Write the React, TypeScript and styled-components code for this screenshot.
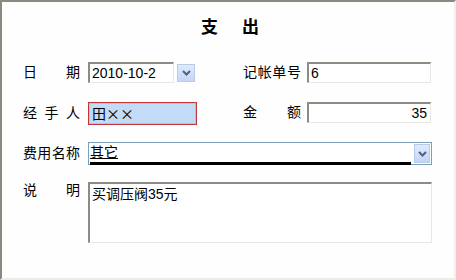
import { FC } from 'react';
import styled, { createGlobalStyle } from 'styled-components';

const FONT = `"Liberation Sans", "Noto Sans CJK SC", sans-serif`;
const CJK_FONT = `"Noto Sans CJK SC", "Liberation Sans", sans-serif`;

const GlobalStyle = createGlobalStyle`
  html, body {
    margin: 0;
    padding: 0;
    background: #fff;
  }
  body {
    font-family: ${FONT};
  }
`;

const Panel = styled.div`
  box-sizing: border-box;
  width: 456px;
  height: 280px;
  background: #fefefe;
  border-top: 2px solid #8a8a80;
  border-left: 2px solid #8a8a80;
  border-right: 2px solid #f0f0ec;
  border-bottom: 2px solid #ecece8;
  display: flex;
  flex-direction: column;
`;

const Title = styled.div`
  margin-top: 15px;
  height: 22px;
  line-height: 22px;
  text-align: center;
  font-size: 17px;
  font-weight: bold;
  color: #000;
  padding-left: 4px;
`;

const TitleGap = styled.span`
  display: inline-block;
  width: 24px;
`;

const Rows = styled.div`
  margin-top: 23px;
  display: flex;
  flex-direction: column;
`;

const Row = styled.div<{ $h: number }>`
  display: flex;
  align-items: flex-start;
  height: ${(p) => p.$h}px;
  padding-left: 21px;
`;

const Group = styled.div<{ $w?: number; $gap?: number }>`
  display: flex;
  align-items: flex-start;
  width: ${(p) => (p.$w ? `${p.$w}px` : 'auto')};
  gap: ${(p) => p.$gap ?? 8}px;
`;

const Label = styled.div<{ $w?: number; $lh?: number }>`
  flex-shrink: 0;
  width: ${(p) => p.$w ?? 57}px;
  display: flex;
  justify-content: space-between;
  font-size: 14px;
  line-height: ${(p) => p.$lh ?? 21}px;
  color: #000;
`;

const Sunken = styled.div<{ $w: number; $h: number; $align?: string }>`
  box-sizing: border-box;
  flex-shrink: 0;
  width: ${(p) => p.$w}px;
  height: ${(p) => p.$h}px;
  background: #fff;
  border-top: 2px solid #8c8c84;
  border-left: 2px solid #8c8c84;
  border-right: 1px solid #e8e8e2;
  border-bottom: 1px solid #e8e8e2;
  font-size: 14px;
  line-height: 18px;
  padding: 0 3px 0 2px;
  text-align: ${(p) => p.$align ?? 'left'};
  color: #000;
  white-space: nowrap;
  overflow: hidden;
`;

const Focused = styled.div`
  box-sizing: border-box;
  width: 109px;
  height: 23px;
  background: #c2dcf8;
  border: 1px solid #c03838;
  box-shadow: inset 0 0 0 1px #e8b0b0;
  font-family: ${CJK_FONT};
  font-size: 14px;
  line-height: 20px;
  padding-left: 3px;
  color: #000;
`;

const DropButton = styled.div<{ $w: number; $h: number }>`
  box-sizing: border-box;
  flex-shrink: 0;
  width: ${(p) => p.$w}px;
  height: ${(p) => p.$h}px;
  border: 1px solid #b8cce8;
  background: linear-gradient(#dfe9fb, #c4d6f6);
  display: flex;
  align-items: center;
  justify-content: center;
`;

const DateWrap = styled.div`
  display: flex;
  align-items: flex-start;
  gap: 3px;
`;

const ButtonSlot = styled.div`
  margin-top: 2px;
`;

const Combo = styled.div`
  box-sizing: border-box;
  width: 344px;
  height: 23px;
  background: #fff;
  border: 1px solid #7f9db9;
  display: flex;
  align-items: center;
  padding: 0 1px;
`;

const ComboText = styled.div`
  flex: 1;
  height: 18px;
  font-size: 14px;
  line-height: 17px;
  border-bottom: 3px solid #000;
  margin-top: 1px;
  margin-right: 3px;
  text-decoration: underline;
  color: #000;
`;

const Memo = styled(Sunken)`
  white-space: normal;
  line-height: 18px;
  padding-top: 1px;
`;

const Chevron: FC = () => (
  <svg width="9" height="6" viewBox="0 0 9 6">
    <polyline points="1,1 4.5,4.5 8,1" fill="none" stroke="#4d6185" strokeWidth="2" />
  </svg>
);

const spread = (s: string) => s.split('').map((c, i) => <span key={i}>{c}</span>);

const App: FC = () => (
  <>
    <GlobalStyle />
    <Panel>
      <Title>
        支<TitleGap />出
      </Title>
      <Rows>
        <Row $h={40}>
          <Group $w={220}>
            <Label>{spread('日期')}</Label>
            <DateWrap>
              <Sunken $w={86} $h={21}>2010-10-2</Sunken>
              <ButtonSlot>
                <DropButton $w={18} $h={18}>
                  <Chevron />
                </DropButton>
              </ButtonSlot>
            </DateWrap>
          </Group>
          <Group $gap={6}>
            <Label $w={58}>{spread('记帐单号')}</Label>
            <Sunken $w={124} $h={21}>6</Sunken>
          </Group>
        </Row>
        <Row $h={40}>
          <Group $w={220}>
            <Label $lh={23}>{spread('经手人')}</Label>
            <Focused>田××</Focused>
          </Group>
          <Group $gap={6}>
            <Label $w={58}>{spread('金额')}</Label>
            <Sunken $w={124} $h={21} $align="right">35</Sunken>
          </Group>
        </Row>
        <Row $h={40}>
          <Group>
            <Label $lh={23}>{spread('费用名称')}</Label>
            <Combo>
              <ComboText>其它</ComboText>
              <DropButton $w={16} $h={19}>
                <Chevron />
              </DropButton>
            </Combo>
          </Group>
        </Row>
        <Row $h={62}>
          <Group>
            <Label $lh={16}>{spread('说明')}</Label>
            <Memo $w={344} $h={61}>买调压阀35元</Memo>
          </Group>
        </Row>
      </Rows>
    </Panel>
  </>
);

export default App;
